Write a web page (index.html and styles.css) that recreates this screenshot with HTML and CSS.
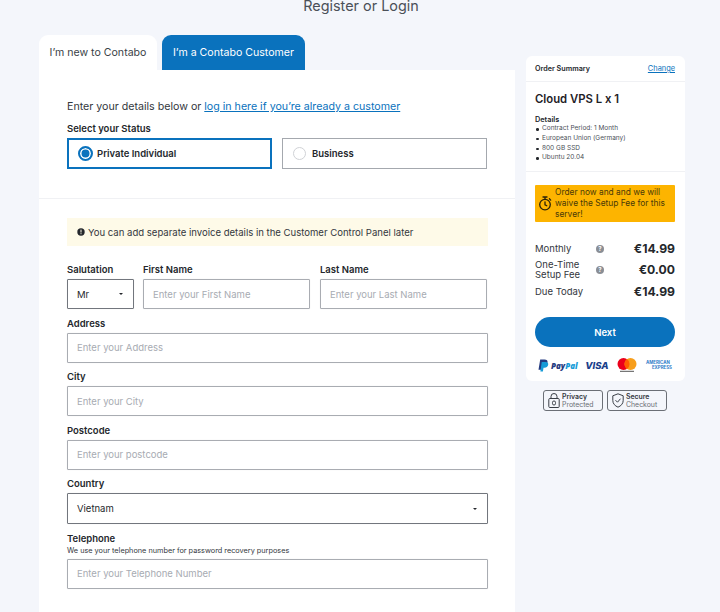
FILE: index.html
```html
<!DOCTYPE html>
<html lang="en">
<head>
<meta charset="utf-8">
<title>Register or Login</title>
<link rel="stylesheet" href="styles.css">
</head>
<body>
<h1 class="page-title">Register or Login</h1>
<div class="layout">
  <main class="main-col">
    <div class="tabs">
      <div class="tab tab-active">I’m new to Contabo</div>
      <div class="tab tab-blue">I’m a Contabo Customer</div>
    </div>
    <div class="card">
      <section class="status-section">
        <p class="intro">Enter your details below or <a href="#">log in here if you’re already a customer</a></p>
        <div class="label status-label">Select your Status</div>
        <div class="status-row">
          <div class="status-option selected"><span class="radio radio-on"></span>Private Individual</div>
          <div class="status-option"><span class="radio"></span>Business</div>
        </div>
      </section>
      <section class="form-section">
        <div class="notice">
          <svg width="8" height="8" viewBox="0 0 8 8"><circle cx="4" cy="4" r="3.7" fill="#24272c"/><rect x="3.5" y="1.6" width="1" height="2.9" fill="#fefae8"/><rect x="3.5" y="5.2" width="1" height="1" fill="#fefae8"/></svg>
          You can add separate invoice details in the Customer Control Panel later
        </div>
        <div class="name-row">
          <div class="field field-sal">
            <div class="label">Salutation</div>
            <div class="select">Mr<span class="caret"></span></div>
          </div>
          <div class="field field-name">
            <div class="label">First Name</div>
            <input class="input" placeholder="Enter your First Name">
          </div>
          <div class="field field-name">
            <div class="label">Last Name</div>
            <input class="input" placeholder="Enter your Last Name">
          </div>
        </div>
        <div class="field">
          <div class="label">Address</div>
          <input class="input" placeholder="Enter your Address">
        </div>
        <div class="field">
          <div class="label">City</div>
          <input class="input" placeholder="Enter your City">
        </div>
        <div class="field">
          <div class="label">Postcode</div>
          <input class="input" placeholder="Enter your postcode">
        </div>
        <div class="field">
          <div class="label">Country</div>
          <div class="select select-tall">Vietnam<span class="caret"></span></div>
        </div>
        <div class="field">
          <div class="label label-tight">Telephone</div>
          <div class="hint">We use your telephone number for password recovery purposes</div>
          <input class="input" placeholder="Enter your Telephone Number">
        </div>
      </section>
    </div>
  </main>
  <aside class="side-col">
    <div class="summary">
      <div class="summary-head"><strong>Order Summary</strong><a href="#">Change</a></div>
      <div class="summary-product">
        <h2>Cloud VPS L x 1</h2>
        <div class="details-title">Details</div>
        <ul>
          <li>Contract Period: 1 Month</li>
          <li>European Union (Germany)</li>
          <li>800 GB SSD</li>
          <li>Ubuntu 20.04</li>
        </ul>
      </div>
      <div class="summary-body">
        <div class="promo">
          <svg width="14" height="15" viewBox="0 0 14 15" fill="none" stroke="#2a2208" stroke-width="1.3"><circle cx="7" cy="8.6" r="5.3"/><path d="M5 1h4M7 1v2M7 5.8v3l1.8 1M11.4 2.8l1.3 1.3" stroke-linecap="round"/></svg>
          <span>Order now and and we will waive the Setup Fee for this server!</span>
        </div>
        <div class="price-row"><span class="price-name">Monthly</span><span class="help">?</span><span class="price">€14.99</span></div>
        <div class="price-row price-row-two"><span class="price-name">One-Time<br>Setup Fee</span><span class="help">?</span><span class="price">€0.00</span></div>
        <div class="price-row"><span class="price-name">Due Today</span><span class="price">€14.99</span></div>
        <button class="next">Next</button>
        <div class="payments">
          <span class="pay-paypal">
            <svg width="11" height="13" viewBox="0 0 11 13"><path d="M2.2.5h4.3c2.3 0 3.4 1.2 3 3-.4 2-1.9 3.1-4 3.1H4L3.3 10.7H.5z" fill="#253b80"/><path d="M3.7 3h3.9c1.8 0 2.9 1 2.6 2.8-.4 2-1.800 3-3.700 3H5.500l-.6 3.700H2.400z" fill="#179bd7"/></svg>
            <i>Pay</i><i class="pal">Pal</i>
          </span>
          <span class="pay-visa">VISA</span>
          <span class="pay-mc">
            <svg width="20" height="14" viewBox="0 0 20 14"><circle cx="6.5" cy="6" r="6" fill="#eb001b"/><circle cx="13.5" cy="6" r="6" fill="#f79e1b"/><path d="M10 1.1a6 6 0 0 1 0 9.800 6 6 0 0 1 0-9.800z" fill="#ff5f00"/><rect x="3" y="12.8" width="14" height="1" fill="#555"/></svg>
          </span>
          <span class="pay-amex">AMERICAN<br><span class="amex-2">EXPRESS</span></span>
        </div>
      </div>
    </div>
    <div class="badges">
      <div class="badge">
        <svg width="12" height="15" viewBox="0 0 12 15" fill="none" stroke="#3a3f47" stroke-width="1"><rect x=".8" y="5.5" width="10.4" height="9" rx="1"/><path d="M3 5.500V3.500a3 3 0 0 1 6 0v2"/><rect x="4.500" y="8" width="3" height="4" rx="1.400"/></svg>
        <div><b>Privacy</b><span>Protected</span></div>
      </div>
      <div class="badge">
        <svg width="12" height="15" viewBox="0 0 12 15" fill="none" stroke="#3a3f47" stroke-width="1"><path d="M6 .8l5.2 2v4.700c0 3.200-2.200 5.400-5.200 6.700C3 12.900.8 10.700.8 7.500V2.800z"/><path d="M3.500 7.200l2 2 3-3.500"/></svg>
        <div><b>Secure</b><span>Checkout</span></div>
      </div>
    </div>
  </aside>
</div>
</body>
</html>
```

FILE: styles.css
```css
* { box-sizing: border-box; }
html, body { margin: 0; padding: 0; height: 612px; overflow: hidden; }
body {
  background: #f4f6fb;
  font-family: Inter, "Liberation Sans", sans-serif;
  color: #24272c;
}
a { color: #0a72bd; }
.page-title {
  margin: 0;
  height: 12px;
  font-size: 14.4px;
  line-height: 12px;
  font-weight: 400;
  color: #4b5058;
  text-align: center;
  padding-left: 2px;
}
.layout {
  display: flex;
  gap: 11px;
  padding: 23px 0 0 39px;
  align-items: flex-start;
}
.main-col { width: 476px; }
.tabs { display: flex; gap: 5px; height: 35px; }
.tab {
  border-radius: 9px 9px 0 0;
  font-size: 10.6px;
  line-height: 36px;
  text-align: center;
}
.tab-active { width: 118px; background: #fff; color: #3a3f47; }
.tab-blue { width: 143px; background: #0a72bd; color: #fff; }
.card { background: #fff; height: 560px; }
.status-section {
  height: 129px;
  padding: 30px 28px 0;
  border-bottom: 1px solid #f0f1f4;
}
.intro { margin: 0; font-size: 10.65px; line-height: 14px; color: #33373d; }
.label { font-size: 9.5px; line-height: 12px; font-weight: 600; color: #24272c; }
.status-label { margin: 9px 0 3px; }
.status-row { display: flex; gap: 10px; }
.status-option {
  width: 205px;
  height: 31px;
  border: 1px solid #a4a8ae;
  display: flex;
  align-items: center;
  gap: 6px;
  padding-left: 10px;
  font-size: 9.5px;
  font-weight: 600;
}
.status-option.selected { border: 2px solid #0a72bd; padding-left: 9px; gap: 4px; }
.radio {
  width: 13px;
  height: 13px;
  border-radius: 50%;
  border: 1px solid #d0d2d6;
  background: #fff;
}
.radio-on {
  width: 15px;
  height: 15px;
  border: 2px solid #0a72bd;
  box-shadow: inset 0 0 0 1.5px #fff;
  background: #0a72bd;
}
.form-section { padding: 19px 27px 0 28px; }
.notice {
  height: 28px;
  background: #fefae8;
  display: flex;
  align-items: center;
  gap: 3px;
  padding-left: 10px;
  font-size: 9.55px;
  color: #33373d;
  margin-bottom: 18px;
  width: 421px;
}
.name-row { display: flex; gap: 9px; margin-bottom: 0.6px; }
.field { margin-bottom: 8.4px; }
.field-sal { width: 67px; flex: none; }
.field-name { width: 167px; flex: none; }
.field-name + .field-name { margin-left: 1px; }
.field .label { margin-bottom: 2px; height: 13px; line-height: 12px; }
.field .label-tight { margin-bottom: 0; }
.input, .select {
  display: block;
  width: 100%;
  height: 30px;
  border: 1px solid #a9acb2;
  border-radius: 1px;
  background: #fff;
  padding: 0 9px;
  font-family: inherit;
  font-size: 9.5px;
  outline: none;
  box-shadow: 0 0 1px rgba(0,0,0,.15);
}
.input::placeholder { color: #a7abb2; opacity: 1; }
.select {
  display: flex;
  align-items: center;
  justify-content: space-between;
  border-color: #72767d;
  color: #24272c;
}
.select-tall { height: 31px; padding-right: 9px; }
.caret {
  width: 0;
  height: 0;
  border-left: 2.5px solid transparent;
  border-right: 2.5px solid transparent;
  border-top: 2.5px solid #24272c;
  margin-right: 1px;
}
.hint { font-size: 7.3px; line-height: 10px; color: #33373d; margin-bottom: 3px; }
.side-col { width: 159px; margin-top: 21px; }
.summary { background: #fff; border-radius: 6px; height: 325px; }
.summary-head {
  height: 26px;
  padding: 0 10px 0 9px;
  display: flex;
  align-items: center;
  justify-content: space-between;
  font-size: 7.2px;
  border-bottom: 1px solid #f0f1f4;
}
.summary-head strong { font-weight: 600; }
.summary-head a { font-size: 7.4px; }
.summary-product { height: 90px; padding: 10px 9px 0; border-bottom: 1px solid #f0f1f4; }
.summary-product h2 { margin: 0 0 9px; font-size: 11.3px; line-height: 14px; font-weight: 600; color: #1e2126; }
.details-title { font-size: 7.3px; line-height: 9px; font-weight: 600; }
.summary-product ul { margin: 0; padding: 0 0 0 7px; list-style: none; }
.summary-product li {
  font-size: 6.5px;
  line-height: 9.8px;
  color: #4b5058;
  position: relative;
}
.summary-product li::before {
  content: "";
  position: absolute;
  left: -6px;
  top: 4px;
  width: 2.5px;
  height: 2.5px;
  border-radius: 50%;
  background: #24272c;
}
.summary-body { padding: 13px 10px 0 9px; }
.promo {
  height: 37px;
  background: #fdb400;
  border-radius: 1px;
  display: flex;
  align-items: center;
  gap: 3px;
  padding: 0 6px 0 3px;
  font-size: 8.4px;
  line-height: 11px;
  color: #4a3a08;
  margin-bottom: 18px;
}
.promo svg { flex: none; }
.price-row {
  display: flex;
  align-items: center;
  height: 17px;
  margin-bottom: 3px;
}
.price-row-two { height: 19px; margin-bottom: 4px; }
.price-name { font-size: 9.5px; line-height: 9.5px; color: #33373d; width: 61px; }
.help {
  width: 8px;
  height: 8px;
  border-radius: 50%;
  background: #8a8e95;
  color: #fff;
  font-size: 6px;
  line-height: 8px;
  font-weight: 700;
  text-align: center;
}
.price { margin-left: auto; font-size: 12.2px; font-weight: 700; color: #24272c; }
.next {
  display: block;
  width: 140px;
  height: 30px;
  margin-top: 17px;
  border: none;
  border-radius: 15px;
  background: #0a72bd;
  color: #fff;
  font-family: inherit;
  font-size: 9.5px;
  font-weight: 600;
}
.payments {
  display: flex;
  align-items: center;
  justify-content: space-between;
  padding: 0 3px;
  margin-top: 11px;
  height: 14px;
}
.pay-paypal { display: flex; align-items: center; gap: 2px; font-size: 8px; font-weight: 800; color: #253b80; font-family: "Open Sans", sans-serif; }
.pay-paypal i + i { margin-left: -2px; }
.pay-paypal .pal { color: #179bd7; }
.pay-visa { font-size: 9.5px; font-weight: 800; font-style: italic; color: #1a3f8b; margin-left: -1px; }
.pay-mc { display: flex; }
.pay-amex { font-size: 4.4px; line-height: 5.5px; font-weight: 700; color: #2f7cc9; text-align: left; }
.amex-2 { padding-left: 6px; }
.badges { display: flex; gap: 4px; margin-top: 9px; padding-left: 17px; }
.badge {
  width: 60px;
  height: 21px;
  border: 1px solid #6b6f76;
  border-radius: 3px;
  display: flex;
  align-items: center;
  gap: 2px;
  padding: 0 2px 0 4px;
  font-size: 6.9px;
  line-height: 8px;
  color: #6b6f76;
}
.badge b { display: block; color: #33373d; font-weight: 600; }
.badge span { display: block; }
```
